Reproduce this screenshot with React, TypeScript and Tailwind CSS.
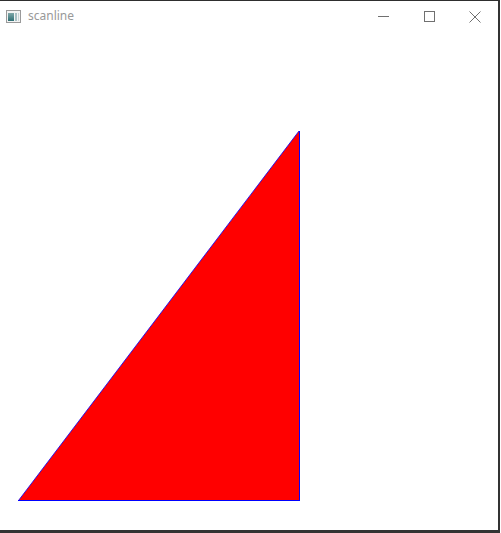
import React from "react";

export default function App() {
  return (
    <div className="w-[501px] h-[533px] bg-white overflow-hidden">
      <div className="w-[500px] h-[533px] flex flex-col border-t border-t-[#2e2e2e] border-r-2 border-r-[#333333] border-b-[3px] border-b-[#333333] bg-white">
        <div className="h-[30px] flex items-center shrink-0" style={{ fontFamily: "'Noto Sans', 'Open Sans', sans-serif" }}>
          <svg width="16" height="14" viewBox="0 0 16 14" className="ml-[6px] mt-[1px]" shapeRendering="crispEdges">
            <defs>
              <linearGradient id="g" x1="0" y1="0" x2="0" y2="1">
                <stop offset="0" stopColor="#7fa7a8" />
                <stop offset="1" stopColor="#2f6f74" />
              </linearGradient>
            </defs>
            <rect x="0.5" y="0.5" width="14" height="12" fill="#f3f3f3" stroke="#9a9a9a" />
            <rect x="2" y="3" width="6" height="8" fill="url(#g)" />
            <rect x="9" y="3" width="2" height="8" fill="#a8c0c4" />
            <rect x="12" y="3" width="1" height="8" fill="#c8d4d6" />
          </svg>
          <span className="ml-[6px] text-[12px] text-[#999999] leading-none">scanline</span>
          <div className="flex-1" />
          <svg width="12" height="12" viewBox="0 0 12 12" className="mr-[34px] mt-[1px]" shapeRendering="crispEdges">
            <line x1="0" y1="5.5" x2="11" y2="5.5" stroke="#707070" strokeWidth="1" />
          </svg>
          <svg width="12" height="12" viewBox="0 0 12 12" className="mr-[33px] mt-[1px]" shapeRendering="crispEdges">
            <rect x="0.5" y="0.5" width="10" height="10" fill="none" stroke="#707070" strokeWidth="1" />
          </svg>
          <svg width="12" height="12" viewBox="0 0 12 12" className="mr-[17px] mt-[1px]">
            <line x1="0.5" y1="0.5" x2="11.5" y2="11.5" stroke="#707070" strokeWidth="1" />
            <line x1="11.5" y1="0.5" x2="0.5" y2="11.5" stroke="#707070" strokeWidth="1" />
          </svg>
        </div>
        <div className="flex-1">
          <svg width="498" height="499" viewBox="0 31 498 499" className="block">
            <polygon points="18.5,500.5 299,131 299,500.5" fill="#ff0000" />
            <line x1="18.5" y1="500.5" x2="299" y2="131" stroke="#0000ff" strokeWidth="0.8" />
            <line x1="299.5" y1="131" x2="299.5" y2="501" stroke="#0000ff" strokeWidth="1" shapeRendering="crispEdges" />
            <line x1="18" y1="500.5" x2="300" y2="500.5" stroke="#0000ff" strokeWidth="1" shapeRendering="crispEdges" />
          </svg>
        </div>
      </div>
    </div>
  );
}
